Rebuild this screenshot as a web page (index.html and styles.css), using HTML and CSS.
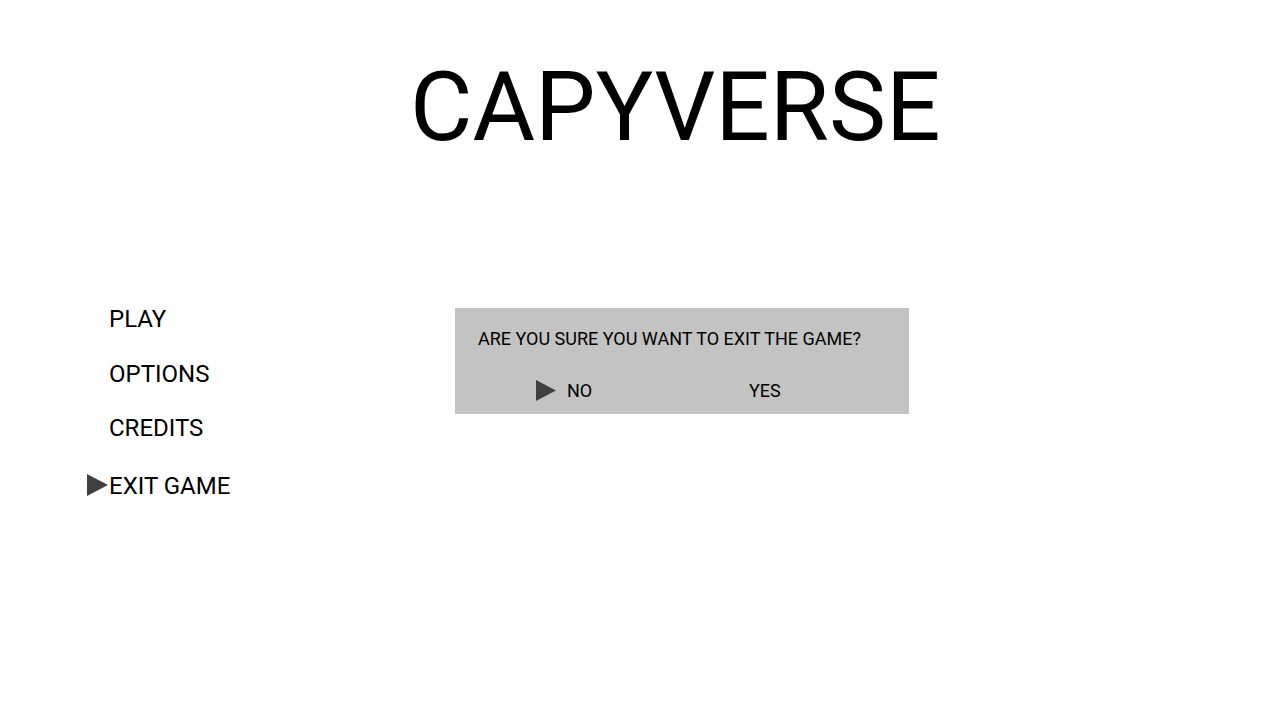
FILE: index.html
```html
<!DOCTYPE html>
<html>
<head>
<meta charset="utf-8">
<link rel="stylesheet" href="styles.css">
</head>
<body>
<div class="screen">
  <h1 class="title">CAPYVERSE</h1>
  <div class="main">
    <ul class="menu">
      <li class="item item-play"><span class="marker"></span><span class="label">PLAY</span></li>
      <li class="item item-options"><span class="marker"></span><span class="label">OPTIONS</span></li>
      <li class="item item-credits"><span class="marker"></span><span class="label">CREDITS</span></li>
      <li class="item item-exit selected"><span class="marker"><svg width="21" height="22" viewBox="0 0 21 22"><polygon points="0,0 21,11 0,22" fill="#404040"/></svg></span><span class="label">EXIT GAME</span></li>
    </ul>
    <div class="dialog">
      <p class="question">ARE YOU SURE YOU WANT TO EXIT THE GAME?</p>
      <div class="choices">
        <div class="choice choice-no selected"><span class="cmarker"><svg width="20" height="21" viewBox="0 0 20 21"><polygon points="0,0 20,10.5 0,21" fill="#404040"/></svg></span><span>NO</span></div>
        <div class="choice choice-yes"><span>YES</span></div>
      </div>
    </div>
  </div>
</div>
</body>
</html>
```
FILE: styles.css
```css
html, body {
  margin: 0;
  padding: 0;
  background: #ffffff;
}
.screen {
  width: 1280px;
  height: 720px;
  font-family: Roboto, "Liberation Sans", sans-serif;
  color: #000;
}
.title {
  margin: 0;
  padding: 59px 0 0 410px;
  font-size: 96px;
  line-height: 96px;
  font-weight: 400;
}
.main {
  display: flex;
  margin-top: 152px;
}
.menu {
  list-style: none;
  margin: 0;
  padding: 0 0 0 87px;
  width: 368px;
  font-size: 24px;
  line-height: 24px;
}
.item {
  display: flex;
  align-items: center;
}
.marker {
  width: 21px;
  height: 22px;
  display: flex;
}
.label {
  margin-left: 1px;
}
.item-options { margin-top: 31px; }
.item-credits { margin-top: 30px; }
.item-exit { margin-top: 34px; }
.item-exit .marker { margin-top: -2px; }
.dialog {
  margin-top: 1px;
  width: 454px;
  height: 106px;
  box-sizing: border-box;
  background: #c3c3c3;
  padding: 22px 0 0 23px;
}
.question {
  margin: 0;
  font-size: 18px;
  line-height: 18px;
}
.choices {
  display: flex;
  margin-top: 32px;
  font-size: 18px;
  line-height: 18px;
}
.choice {
  display: flex;
  align-items: center;
}
.choice-no {
  margin-left: 58px;
  width: 213px;
}
.cmarker {
  width: 20px;
  height: 21px;
  display: flex;
  margin-right: 11px;
}
```
